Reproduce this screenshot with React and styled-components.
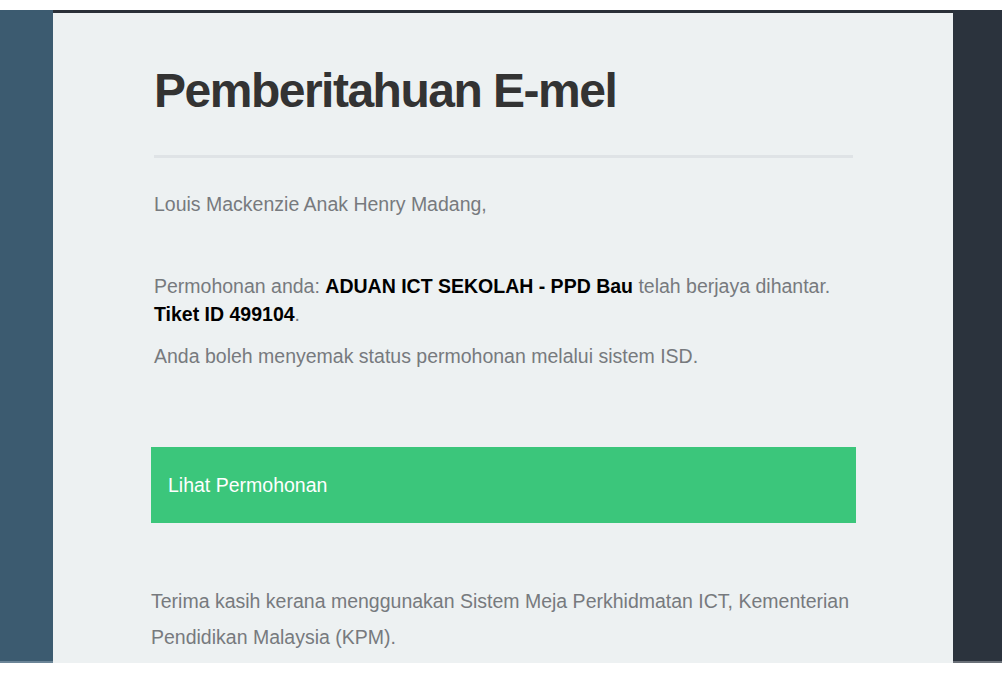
import React from "react"
import styled, { createGlobalStyle } from "styled-components"

const GlobalStyle = createGlobalStyle`
	html, body {
		margin: 0;
		padding: 0;
		background: #ffffff;
	}
	body {
		font-family: "Liberation Sans", Arial, sans-serif;
	}
`

const App = () => {
	return (
		<>
			<GlobalStyle />
			<Frame>
				<Side tone="#3c5b70" edge="#6b8597" />
				<Mail>
					<Title>Pemberitahuan E-mel</Title>
					<Rule />
					<Greeting>Louis Mackenzie Anak Henry Madang,</Greeting>
					<Text>
						Permohonan anda: <Strong>ADUAN ICT SEKOLAH - PPD Bau</Strong> telah
						berjaya dihantar. <Strong>Tiket ID 499104</Strong>.
					</Text>
					<Text>Anda boleh menyemak status permohonan melalui sistem ISD.</Text>
					<ActionButton href="#">Lihat Permohonan</ActionButton>
					<Footer>
						Terima kasih kerana menggunakan Sistem Meja Perkhidmatan ICT,
						Kementerian Pendidikan Malaysia (KPM).
					</Footer>
				</Mail>
				<Side tone="#2b333d" edge="#6a7078" />
			</Frame>
		</>
	)
}

const Frame = styled.div`
	display: grid;
	grid-template-columns: 53px 900px 49px;
	height: 653px;
	margin-top: 10px;
	overflow: hidden;
`

const Side = styled.div`
	background: ${props => props.tone};
	border-bottom: 2px solid ${props => props.edge};
`

const Mail = styled.div`
	background: #edf1f2;
	border-top: 3px solid #2a3038;
	padding: 50px 100px 0 101px;
	overflow: hidden;
`

const Title = styled.h1`
	margin: 0;
	font-size: 48px;
	line-height: 55px;
	font-weight: bold;
	letter-spacing: -1.5px;
	color: #333333;
`

const Rule = styled.div`
	height: 3px;
	margin-top: 37px;
	background: #dfe3e6;
`

const Text = styled.p`
	margin: 0 0 14px;
	font-size: 19.5px;
	line-height: 28px;
	color: #777a7e;
`

const Greeting = styled(Text)`
	margin: 32px 0 54px;
`

const Strong = styled.strong`
	color: #000000;
	font-weight: bold;
`

const ActionButton = styled.a`
	display: flex;
	align-items: center;
	height: 76px;
	margin: 77px -3px 0;
	padding: 0 17px;
	background: #3bc67b;
	color: #ffffff;
	font-size: 19.5px;
	text-decoration: none;
`

const Footer = styled.p`
	margin: 60px -3px 0;
	font-size: 19.5px;
	line-height: 36px;
	color: #777a7e;
`

export default App
